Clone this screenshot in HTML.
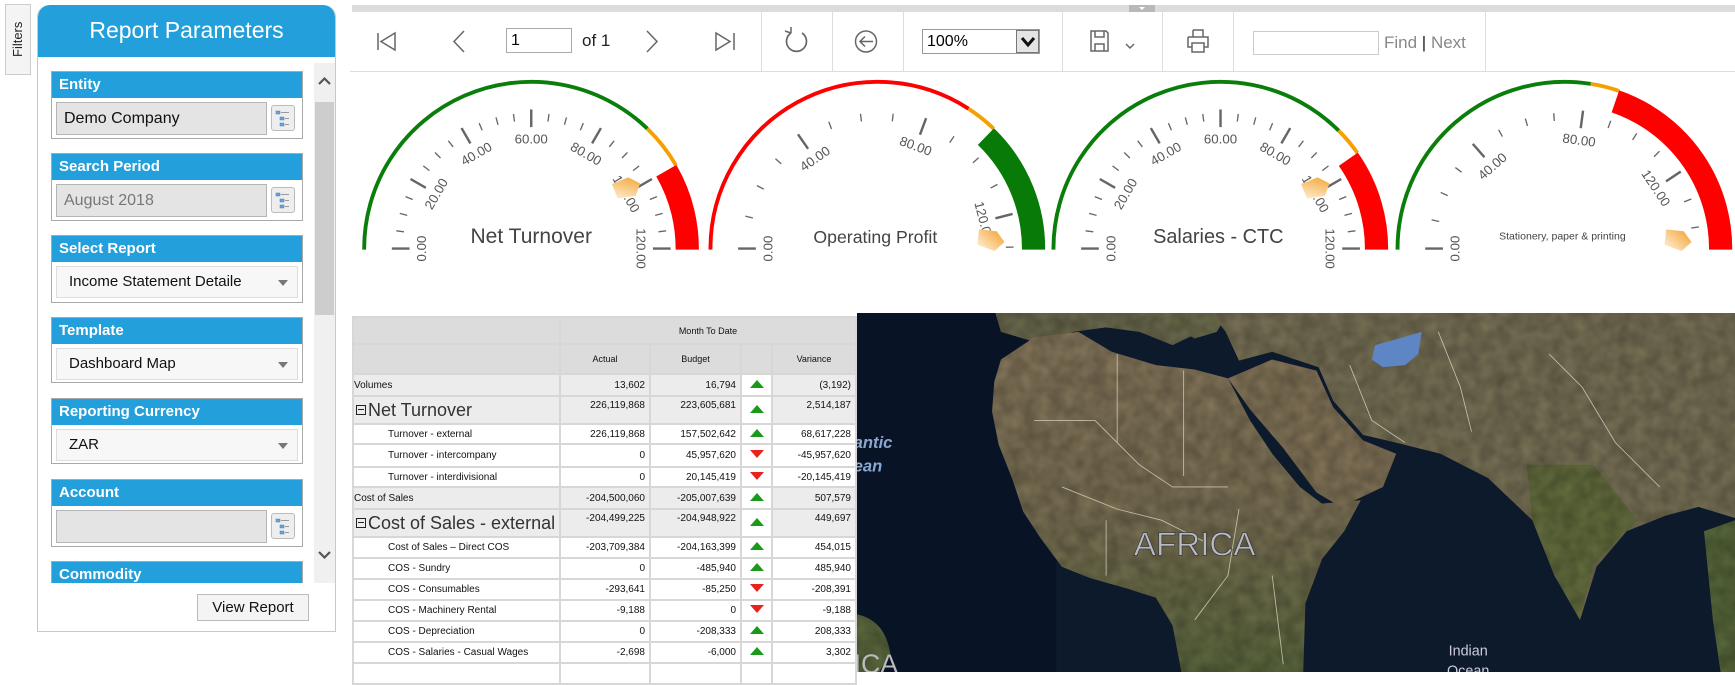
<!DOCTYPE html>
<html><head><meta charset="utf-8"><style>
*{box-sizing:border-box;margin:0;padding:0}
body{width:1735px;height:672px;overflow:hidden;background:#fff;font-family:"Liberation Sans",Arial,sans-serif;position:relative}
.abs{position:absolute}
.tab{left:5px;top:4px;width:26px;height:71px;border:1px solid #ccc;background:#f4f4f4;}
.tab span{position:absolute;left:4px;top:52px;transform:rotate(-90deg);transform-origin:0 0;font-size:13px;color:#222;white-space:nowrap}
.panel{left:37px;top:5px;width:299px;height:627px;border:1px solid #c8c8c8;border-top:none;border-radius:12px 12px 0 0;background:#fff;overflow:hidden}
.phead{position:absolute;left:0;top:0;width:100%;height:52px;background:#239fdb;color:#fff;font-size:23px;text-align:center;line-height:50px;border-radius:12px 12px 0 0}
.grp{position:absolute;left:13px;width:252px;border:1px solid #a9a9a9;background:#fff}
.grp .h{height:26px;background:#239fdb;color:#fff;font-weight:bold;font-size:15px;line-height:26px;padding-left:7px}
.inp{position:absolute;left:4px;top:30px;width:211px;height:33px;background:#e4e4e4;border:1px solid #b5b5b5;font-size:16px;line-height:31px;padding-left:7px;color:#111}
.btn{position:absolute;left:219px;top:33px;width:24px;height:26px;border:1px solid #bbb;border-radius:3px;background:#eee}
.sel{position:absolute;left:4px;top:30px;width:242px;height:32px;background:#f7f7f7;border:1px solid #ddd;font-size:15px;line-height:30px;padding-left:12px;color:#111}
.sel:after{content:"";position:absolute;right:9px;top:13px;border:5px solid transparent;border-top:6px solid #777}
.tb{position:absolute;top:12px;height:60px;border-left:1px solid #ddd}
table{border-collapse:collapse;table-layout:fixed;font-size:10px;color:#111}
td{border:2px solid #d7d7d7;padding:0 4px;white-space:nowrap;overflow:hidden}
td.n{text-align:right}
tr.g td{background:#ececec}
.up{display:inline-block;border:7px solid transparent;border-bottom:8px solid #1a9a1a;border-top:0}
.dn{display:inline-block;border:7px solid transparent;border-top:8px solid #e8231e;border-bottom:0}
td.a{text-align:center;padding:0;background:#fff !important}
.big{font-size:18px;color:#333}
.bx{display:inline-block;width:10px;height:10px;border:1px solid #222;position:relative;margin-right:2px;vertical-align:1px}
.bx:after{content:"";position:absolute;left:1px;right:1px;top:3px;height:1px;background:#222}
</style></head><body>

<div class="abs tab"><span>Filters</span></div>

<div class="abs panel">
  <div class="phead">Report Parameters</div>
  <div class="grp" style="top:66px;height:68px"><div class="h">Entity</div><div class="inp">Demo Company</div><div class="btn"><svg width="22" height="24"><g fill="#6aa3d8" stroke="#4a7fb5" stroke-width=".5"><rect x="4" y="5" width="4" height="3"/><rect x="8" y="11" width="4" height="3"/><rect x="8" y="17" width="4" height="3"/></g><g stroke="#999"><line x1="9" y1="6.5" x2="17" y2="6.5"/><line x1="13" y1="12.5" x2="17" y2="12.5"/><line x1="13" y1="18.5" x2="17" y2="18.5"/></g></svg></div></div>
  <div class="grp" style="top:148px;height:68px"><div class="h">Search Period</div><div class="inp" style="color:#777">August 2018</div><div class="btn"><svg width="22" height="24"><g fill="#6aa3d8" stroke="#4a7fb5" stroke-width=".5"><rect x="4" y="5" width="4" height="3"/><rect x="8" y="11" width="4" height="3"/><rect x="8" y="17" width="4" height="3"/></g><g stroke="#999"><line x1="9" y1="6.5" x2="17" y2="6.5"/><line x1="13" y1="12.5" x2="17" y2="12.5"/><line x1="13" y1="18.5" x2="17" y2="18.5"/></g></svg></div></div>
  <div class="grp" style="top:230px;height:68px"><div class="h">Select Report</div><div class="sel">Income Statement Detaile</div></div>
  <div class="grp" style="top:312px;height:66px"><div class="h">Template</div><div class="sel">Dashboard Map</div></div>
  <div class="grp" style="top:393px;height:66px"><div class="h">Reporting Currency</div><div class="sel">ZAR</div></div>
  <div class="grp" style="top:474px;height:68px"><div class="h">Account</div><div class="inp"></div><div class="btn"><svg width="22" height="24"><g fill="#6aa3d8" stroke="#4a7fb5" stroke-width=".5"><rect x="4" y="5" width="4" height="3"/><rect x="8" y="11" width="4" height="3"/><rect x="8" y="17" width="4" height="3"/></g><g stroke="#999"><line x1="9" y1="6.5" x2="17" y2="6.5"/><line x1="13" y1="12.5" x2="17" y2="12.5"/><line x1="13" y1="18.5" x2="17" y2="18.5"/></g></svg></div></div>
  <div class="grp" style="top:556px;height:40px;border-bottom:none"><div class="h">Commodity</div></div>
  <div class="abs" style="left:0;top:578px;width:299px;height:50px;background:#fff"></div>
  <div class="abs" style="left:276px;top:58px;width:21px;height:520px;background:#f0f0f0"></div>
  <div class="abs" style="left:277px;top:97px;width:19px;height:213px;background:#cdcdcd"></div>
  <svg class="abs" style="left:276px;top:66px" width="21" height="20"><path d="M5 13 L10.5 7.5 L16 13" stroke="#555" stroke-width="2.2" fill="none"/></svg>
  <svg class="abs" style="left:276px;top:540px" width="21" height="20"><path d="M5 7 L10.5 12.5 L16 7" stroke="#555" stroke-width="2.2" fill="none"/></svg>
  <div class="abs" style="left:159px;top:589px;width:112px;height:27px;border:1px solid #bbb;background:#f4f4f4;font-size:15px;text-align:center;line-height:25px;color:#111">View Report</div>
</div>

<div class="abs" style="left:352px;top:5px;width:1383px;height:7px;background:#dcdcdc"></div>
<div class="abs" style="left:1129px;top:5px;width:26px;height:7px;background:#b8b8b8"></div>
<svg class="abs" style="left:1137px;top:6px" width="10" height="5"><path d="M2 1 L5 4 L8 1Z" fill="#fff"/></svg>
<div class="abs" style="left:350px;top:71px;width:1385px;height:1px;background:#ddd"></div>
<div class="tb" style="left:761px"></div><div class="tb" style="left:832px"></div><div class="tb" style="left:903px"></div><div class="tb" style="left:1062px"></div><div class="tb" style="left:1162px"></div><div class="tb" style="left:1233px"></div><div class="tb" style="left:1485px"></div>
<svg class="abs" style="left:350px;top:12px" width="1140" height="58" fill="none" stroke="#666" stroke-width="1.5">
  <path d="M28 21 V38 M45 21 L31 29.5 L45 38Z"/>
  <path d="M114 19 L104 29.5 L114 40"/>
  <path d="M297 19 L307 29.5 L297 40"/>
  <path d="M366 21 L380 29.5 L366 38Z M384 21 V38"/>
  <path d="M441 21 A10 10 0 1 0 452 21" stroke-width="1.7"/><path d="M441 21 L441 15 M441 21 L435 19" />
  <circle cx="516" cy="29.5" r="10.5"/><path d="M510 29.5 H523 M515 24.5 L510 29.5 L515 34.5"/>
  <path d="M741 19 H756 L758 21 V39 H741Z M745 19 V25 H754 V19 M745 39 V32 H754 V39"/>
  <path d="M776 32 L780 36 L784 32"/>
  <path d="M843 18 H853 V25 M843 18 V25 M838 25 H858 V35 H854 M838 25 V35 H842 M842 31 H854 V40 H842Z"/>
</svg>
<div class="abs" style="left:506px;top:28px;width:66px;height:25px;border:1px solid #aaa;font-size:16px;line-height:23px;padding-left:4px">1</div>
<div class="abs" style="left:582px;top:31px;font-size:17px;color:#222">of 1</div>
<div class="abs" style="left:922px;top:29px;width:118px;height:25px;border:1px solid #999;font-size:16px;line-height:23px;padding-left:4px">100%</div>
<div class="abs" style="left:1016px;top:30px;width:23px;height:23px;background:#e4e4e4;border:1px solid #777"></div>
<svg class="abs" style="left:1018px;top:33px" width="20" height="18"><path d="M4 5 L10 12 L16 5" stroke="#111" stroke-width="3" fill="none"/></svg>
<div class="abs" style="left:1253px;top:31px;width:126px;height:24px;border:1px solid #ccc"></div>
<div class="abs" style="left:1384px;top:33px;font-size:17px;color:#888">Find <span style="color:#222">|</span> Next</div>

<svg id="g" class="abs" style="left:352px;top:73px" width="1383" height="212" viewBox="318 66 1250 192" preserveAspectRatio="none">
<defs><clipPath id="cp"><rect x="300" y="60" width="1300" height="166"/></clipPath>
<linearGradient id="pg" x1="1" y1="0" x2="0" y2="1"><stop offset="0" stop-color="#f2a22d"/><stop offset="1" stop-color="#fff2dd"/></linearGradient></defs>
<g id="arcs" clip-path="url(#cp)"></g><g id="tk"></g>
<g font-family="Liberation Sans,Arial,sans-serif" fill="#444" text-anchor="middle">
<text x="480" y="220" font-size="19">Net Turnover</text>
<text x="791" y="220" font-size="16">Operating Profit</text>
<text x="1101" y="220" font-size="18">Salaries - CTC</text>
<text x="1412" y="217" font-size="9.5">Stationery, paper &amp; printing</text>
</g>
</svg>

<table class="abs" style="left:352px;top:316px;width:503px">
<colgroup><col style="width:207px"><col style="width:90px"><col style="width:91px"><col style="width:31px"><col style="width:84px"></colgroup>
<tr style="height:27px"><td style="background:#dcdcdc"></td><td colspan="4" style="background:#dcdcdc;text-align:center;font-size:9px">Month To Date</td></tr>
<tr style="height:30px;font-size:9px"><td style="background:#dcdcdc"></td><td style="background:#dcdcdc;text-align:center">Actual</td><td style="background:#dcdcdc;text-align:center">Budget</td><td style="background:#dcdcdc"></td><td style="background:#dcdcdc;text-align:center">Variance</td></tr>
<tr class="g" style="height:22px"><td style="padding-left:0">Volumes</td><td class="n">13,602</td><td class="n">16,794</td><td class="a"><span class="up"></span></td><td class="n">(3,192)</td></tr>
<tr class="g" style="height:28px"><td class="big" style="padding-left:2px"><span class="bx"></span>Net Turnover</td><td class="n" style="vertical-align:top;padding-top:3px">226,119,868</td><td class="n" style="vertical-align:top;padding-top:3px">223,605,681</td><td class="a"><span class="up"></span></td><td class="n" style="vertical-align:top;padding-top:3px">2,514,187</td></tr>
<tr style="height:20px"><td style="padding-left:34px">Turnover - external</td><td class="n">226,119,868</td><td class="n">157,502,642</td><td class="a"><span class="up"></span></td><td class="n">68,617,228</td></tr>
<tr style="height:23px"><td style="padding-left:34px">Turnover - intercompany</td><td class="n">0</td><td class="n">45,957,620</td><td class="a"><span class="dn"></span></td><td class="n">-45,957,620</td></tr>
<tr style="height:20px"><td style="padding-left:34px">Turnover - interdivisional</td><td class="n">0</td><td class="n">20,145,419</td><td class="a"><span class="dn"></span></td><td class="n">-20,145,419</td></tr>
<tr class="g" style="height:22px"><td style="padding-left:0">Cost of Sales</td><td class="n">-204,500,060</td><td class="n">-205,007,639</td><td class="a"><span class="up"></span></td><td class="n">507,579</td></tr>
<tr class="g" style="height:28px"><td class="big" style="padding-left:2px"><span class="bx"></span>Cost of Sales - external</td><td class="n" style="vertical-align:top;padding-top:3px">-204,499,225</td><td class="n" style="vertical-align:top;padding-top:3px">-204,948,922</td><td class="a"><span class="up"></span></td><td class="n" style="vertical-align:top;padding-top:3px">449,697</td></tr>
<tr style="height:21px"><td style="padding-left:34px">Cost of Sales – Direct COS</td><td class="n">-203,709,384</td><td class="n">-204,163,399</td><td class="a"><span class="up"></span></td><td class="n">454,015</td></tr>
<tr style="height:21px"><td style="padding-left:34px">COS - Sundry</td><td class="n">0</td><td class="n">-485,940</td><td class="a"><span class="up"></span></td><td class="n">485,940</td></tr>
<tr style="height:21px"><td style="padding-left:34px">COS - Consumables</td><td class="n">-293,641</td><td class="n">-85,250</td><td class="a"><span class="dn"></span></td><td class="n">-208,391</td></tr>
<tr style="height:21px"><td style="padding-left:34px">COS - Machinery Rental</td><td class="n">-9,188</td><td class="n">0</td><td class="a"><span class="dn"></span></td><td class="n">-9,188</td></tr>
<tr style="height:21px"><td style="padding-left:34px">COS - Depreciation</td><td class="n">0</td><td class="n">-208,333</td><td class="a"><span class="up"></span></td><td class="n">208,333</td></tr>
<tr style="height:21px"><td style="padding-left:34px">COS - Salaries - Casual Wages</td><td class="n">-2,698</td><td class="n">-6,000</td><td class="a"><span class="up"></span></td><td class="n">3,302</td></tr>
<tr style="height:21px"><td></td><td></td><td></td><td class="a"></td><td></td></tr>
</table>

<svg class="abs" style="left:857px;top:313px" width="878" height="359" viewBox="775 283 793 324" preserveAspectRatio="none">
<defs><linearGradient id="ld" x1="0" y1="0" x2="0" y2="1"><stop offset="0" stop-color="#8a7a5e"/><stop offset=".55" stop-color="#7d7356"/><stop offset="1" stop-color="#5d6a3e"/></linearGradient>
<filter id="nz"><feTurbulence type="fractalNoise" baseFrequency=".08" numOctaves="2" seed="3"/><feColorMatrix values="0 0 0 0 0  0 0 0 0 0  0 0 0 0 0  0 0 0 .35 0"/><feComposite in2="SourceGraphic" operator="in"/></filter></defs>
<rect x="775" y="283" width="793" height="324" fill="#0c1a2c"/>
<rect x="775" y="283" width="180" height="324" fill="#081426"/>
<g id="land">
<path d="M900 283 H1090 L1085 300 L1060 312 L1030 300 L1000 296 L970 300 L945 312 L925 306 L905 300Z" fill="#6f6d50"/>
<path d="M1040 283 H1110 L1100 300 L1080 306 L1060 295Z" fill="#70704f"/>
<path d="M905 325 L935 305 L975 300 L1005 318 L1045 330 L1080 334 L1110 342 L1130 380 L1150 410 L1175 440 L1195 455 L1230 452 L1215 480 L1195 505 L1180 545 L1178 607 L1068 607 L1060 565 L1045 540 L1020 532 L985 522 L960 512 L940 485 L925 462 L915 432 L903 402 L897 372 L899 345Z" fill="url(#ld)"/>
<path d="M1110 342 L1150 325 L1190 335 L1205 368 L1232 398 L1262 410 L1250 440 L1212 458 L1190 445 L1160 405 L1130 370Z" fill="#86775a"/>
<path d="M1095 283 H1568 V468 L1535 458 L1505 466 L1470 480 L1443 512 L1428 560 L1405 520 L1385 470 L1345 432 L1302 410 L1262 400 L1232 393 L1205 362 L1192 332 L1150 318 L1120 326 L1108 300Z" fill="#7b7458"/>
<path d="M1380 420 L1440 420 L1480 470 L1440 510 L1428 560 L1405 520 L1385 470Z" fill="#66703f"/>
<path d="M1540 480 L1568 470 V607 H1555 L1548 560Z" fill="#5a6b3c"/>
<path d="M775 555 Q800 560 805 590 L795 607 H775Z" fill="#5d6b3f"/>
</g>
<use href="#land" filter="url(#nz)"/>
<path d="M1243 312 L1268 305 L1285 300 L1282 320 L1270 330 L1250 332 L1240 325Z" fill="#5e86c4"/>
<g stroke="#d8d4c0" stroke-width=".8" fill="none" opacity=".8">
<path d="M935 380 L990 380 L1010 400 L1030 420 L1060 440 L1110 440 M1010 320 L1010 400 M1070 335 L1070 430 M960 440 L1010 460 L1050 470 L1090 490 M1120 460 L1110 520 L1080 560 M1150 520 L1160 600 M1000 470 L1000 520 M1220 330 L1240 380 L1270 400 M1300 300 L1320 350 L1330 390 M1400 320 L1430 350 L1460 400 L1500 440"/>
</g>
<text x="1080" y="502" font-family="Liberation Sans,Arial,sans-serif" font-size="30" fill="#b9b9c4" stroke="#333" stroke-width=".6" text-anchor="middle">AFRICA</text>
<text x="772" y="405" font-family="Liberation Sans,Arial,sans-serif" font-size="15" font-weight="bold" font-style="italic" fill="#8aa7d1">antic</text>
<text x="772" y="426" font-family="Liberation Sans,Arial,sans-serif" font-size="15" font-weight="bold" font-style="italic" fill="#8aa7d1">ean</text>
<text x="1327" y="592" font-family="Liberation Sans,Arial,sans-serif" font-size="13" fill="#ccd" text-anchor="middle">Indian</text>
<text x="1327" y="610" font-family="Liberation Sans,Arial,sans-serif" font-size="13" fill="#ccd" text-anchor="middle">Ocean</text>
<text x="772" y="608" font-family="Liberation Sans,Arial,sans-serif" font-size="24" fill="#bbb">ICA</text>
</svg>

<script>
(function(){
var NS="http://www.w3.org/2000/svg",arcs=document.getElementById("arcs"),tk=document.getElementById("tk");
var CY=225,R=151;
function pt(cx,r,a){a=a*Math.PI/180;return [cx+r*Math.cos(a),CY-r*Math.sin(a)];}
function arc(cx,r,a1,a2,col,w){var p1=pt(cx,r,a1),p2=pt(cx,r,a2);var e=document.createElementNS(NS,"path");
e.setAttribute("d","M"+p1[0]+" "+p1[1]+" A"+r+" "+r+" 0 0 1 "+p2[0]+" "+p2[1]);e.setAttribute("stroke",col);e.setAttribute("stroke-width",w);e.setAttribute("fill","none");arcs.appendChild(e);}
function line(cx,r1,r2,a,w){var p=pt(cx,r1,a),q=pt(cx,r2,a);var e=document.createElementNS(NS,"line");
e.setAttribute("x1",p[0]);e.setAttribute("y1",p[1]);e.setAttribute("x2",q[0]);e.setAttribute("y2",q[1]);e.setAttribute("stroke","#666");e.setAttribute("stroke-width",w);tk.appendChild(e);}
function txt(cx,r,a,s){var p=pt(cx,r,a);var e=document.createElementNS(NS,"text");e.setAttribute("x",p[0]);e.setAttribute("y",p[1]+4);
e.setAttribute("font-size","12");e.setAttribute("fill","#555");e.setAttribute("text-anchor","middle");e.setAttribute("font-family","Liberation Sans,Arial,sans-serif");
e.setAttribute("transform","rotate("+(90-a)+" "+p[0]+" "+p[1]+")");e.textContent=s;tk.appendChild(e);}
function ptr(cx,a){var c=pt(cx,103,a);var e=document.createElementNS(NS,"polygon");
e.setAttribute("points","-12,-9 4,-9 12,0 4,9 -12,5");e.setAttribute("fill","url(#pg)");
e.setAttribute("transform","translate("+c[0]+" "+c[1]+") rotate("+(-a+10)+")");tk.appendChild(e);}
var G=[
 {cx:480,k:1.5,max:120,step:5,maj:20,segs:[[181,46,"#0a7d0a",3.5],[46,30,"#f5a000",3.5]],band:[30,-3,"#f00"],p:32},
 {cx:793,k:1.38,max:130,step:10,maj:40,segs:[[181,57,"#f00",3.5],[57,46,"#f5a000",3.5]],band:[46,-3,"#087a08"],p:4},
 {cx:1103,k:1.5,max:120,step:5,maj:20,segs:[[181,45,"#0a7d0a",3.5],[45,35,"#f5a000",3.5]],band:[35,-3,"#f00"],p:32},
 {cx:1414,k:1.22,max:160,step:10,maj:40,segs:[[181,81,"#0a7d0a",3.5],[81,71,"#f5a000",3.5]],band:[71,-3,"#f00"],p:4}
];
G.forEach(function(g){
 g.segs.forEach(function(s){arc(g.cx,R,s[0],s[1],s[2],s[3]);});
 arc(g.cx,R-10,g.band[0],g.band[1],g.band[2],21);
 for(var v=0;v<=g.max;v+=g.step){var a=180-v*g.k;if(a<-2)break;
  if(v%g.maj==0){line(g.cx,110,126,a,2.2);txt(g.cx,99,a,v.toFixed(2));}else line(g.cx,116,123,a,1.2);}
 ptr(g.cx,g.p);
});
})();
</script>
</body></html>
